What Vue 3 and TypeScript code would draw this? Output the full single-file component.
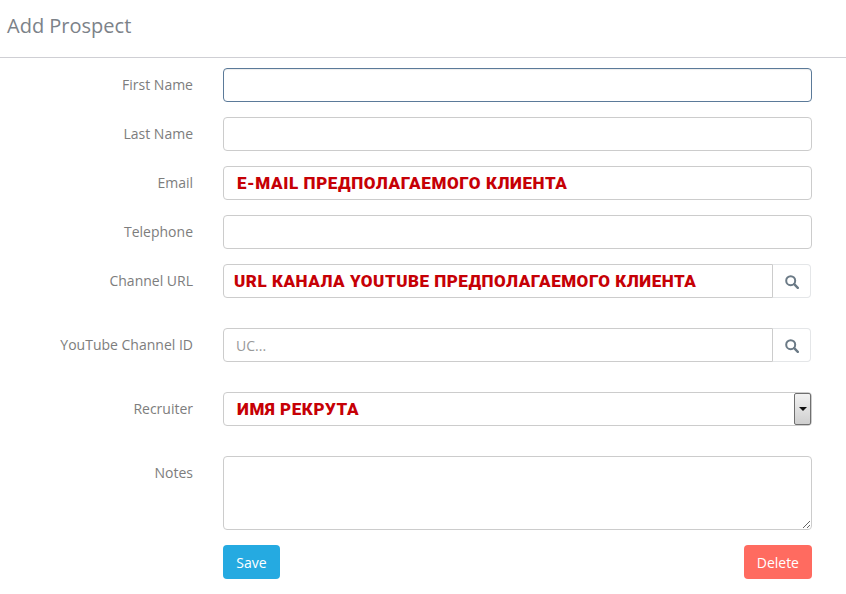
<script setup lang="ts">
const emailText = 'E-MAIL ПРЕДПОЛАГАЕМОГО КЛИЕНТА'
const urlText = 'URL КАНАЛА YOUTUBE ПРЕДПОЛАГАЕМОГО КЛИЕНТА'
const recruiterText = 'ИМЯ РЕКРУТА'
</script>

<template>
  <div class="page">
    <header class="head"><h1>Add Prospect</h1></header>
    <form class="form" @submit.prevent>
      <div class="row">
        <label>First Name</label>
        <input class="ctl focus" type="text" />
      </div>
      <div class="row">
        <label>Last Name</label>
        <input class="ctl" type="text" />
      </div>
      <div class="row">
        <label>Email</label>
        <input class="ctl red" type="text" :value="emailText" />
      </div>
      <div class="row">
        <label>Telephone</label>
        <input class="ctl" type="text" />
      </div>
      <div class="row wide">
        <label>Channel URL</label>
        <div class="group">
          <input class="ctl red url" type="text" :value="urlText" />
          <button class="find" type="button" aria-label="Search">
            <svg width="14" height="14" viewBox="0 0 14 14"><circle cx="5.7" cy="5.7" r="4.5" fill="none" stroke="#6b7a86" stroke-width="2" /><path d="M9.2 9.2l3.6 3.6" stroke="#6b7a86" stroke-width="2.4" stroke-linecap="round" /></svg>
          </button>
        </div>
      </div>
      <div class="row wide">
        <label>YouTube Channel ID</label>
        <div class="group">
          <input class="ctl" type="text" placeholder="UC..." />
          <button class="find" type="button" aria-label="Search">
            <svg width="14" height="14" viewBox="0 0 14 14"><circle cx="5.7" cy="5.7" r="4.5" fill="none" stroke="#6b7a86" stroke-width="2" /><path d="M9.2 9.2l3.6 3.6" stroke="#6b7a86" stroke-width="2.4" stroke-linecap="round" /></svg>
          </button>
        </div>
      </div>
      <div class="row wide">
        <label>Recruiter</label>
        <div class="ctl select red">
          <span>{{ recruiterText }}</span>
          <span class="arrow"><i></i></span>
        </div>
      </div>
      <div class="row">
        <label>Notes</label>
        <textarea class="ctl area"></textarea>
      </div>
      <div class="actions">
        <button class="btn save" type="button">Save</button>
        <button class="btn del" type="button">Delete</button>
      </div>
    </form>
  </div>
</template>

<style>
html, body { margin: 0; background: #fff; }
</style>

<style scoped>
.page {
  width: 846px;
  height: 594px;
  overflow: hidden;
  font-family: "Open Sans", sans-serif;
  font-size: 14px;
  color: #7b7b7b;
}
.head {
  height: 57px;
  border-bottom: 1px solid #cfcfd4;
  padding-left: 7px;
  box-sizing: content-box;
}
.head h1 {
  margin: 0;
  padding-top: 12px;
  font-size: 20px;
  line-height: 28px;
  font-weight: 400;
  color: #7c8289;
}
.form {
  display: flex;
  flex-direction: column;
  gap: 15px;
  padding: 10px 34px 0 0;
}
.row {
  display: grid;
  grid-template-columns: 193px 589px;
  column-gap: 30px;
}
.row.wide { margin-bottom: 15px; }
.row:nth-child(4) { margin-bottom: 0; }
label {
  text-align: right;
  line-height: 20px;
  padding-top: 7px;
  color: #7d7d7d;
}
.ctl {
  box-sizing: border-box;
  width: 100%;
  height: 34px;
  margin: 0;
  padding: 6px 12px;
  border: 1px solid #ccc;
  border-radius: 4px;
  background: #fff;
  outline: none;
  font-family: "Open Sans", sans-serif;
  font-size: 14px;
  color: #555;
}
.ctl::placeholder { color: #999; opacity: 1; }
.focus {
  border-color: #5b7a99;
  box-shadow: inset 0 1px 1px rgba(0, 0, 0, 0.075);
}
.red {
  padding-left: 13px;
  font-family: Roboto, sans-serif;
  font-size: 17px;
  font-weight: 900;
  letter-spacing: 0.6px;
  color: #c60005;
}
.url { padding-left: 10px; letter-spacing: 0.52px; }
.group { display: flex; width: 588px; }
.group .ctl {
  flex: 1;
  min-width: 0;
  border-radius: 4px 0 0 4px;
}
.find {
  box-sizing: border-box;
  flex: none;
  width: 39px;
  height: 34px;
  margin-left: -1px;
  padding: 2px 0 0;
  display: flex;
  align-items: center;
  justify-content: center;
  background: #fff;
  border: 1px solid #e4e6e8;
  border-left-color: #ccc;
  border-radius: 0 4px 4px 0;
}
.select {
  display: flex;
  align-items: center;
  justify-content: space-between;
  padding-right: 0;
  padding-top: 0;
  padding-bottom: 0;
}
.arrow {
  box-sizing: border-box;
  width: 17px;
  height: 32px;
  display: flex;
  align-items: center;
  justify-content: center;
  background: linear-gradient(#f2f2f2, #cfcfcf);
  border: 1px solid #6f6f6f;
  border-radius: 2px;
}
.arrow i {
  width: 0;
  height: 0;
  border-left: 4px solid transparent;
  border-right: 4px solid transparent;
  border-top: 4px solid #111;
}
.area {
  height: 74px;
  resize: vertical;
  display: block;
}
.actions {
  display: flex;
  justify-content: space-between;
  margin-left: 223px;
  width: 589px;
}
.btn {
  height: 34px;
  padding: 0 12px;
  border: 1px solid transparent;
  border-radius: 4px;
  color: #fff;
  font-family: "Open Sans", sans-serif;
  font-size: 14px;
}
.save { background: #25aae1; min-width: 57px; }
.del { background: #ff6b60; min-width: 68px; }
</style>
